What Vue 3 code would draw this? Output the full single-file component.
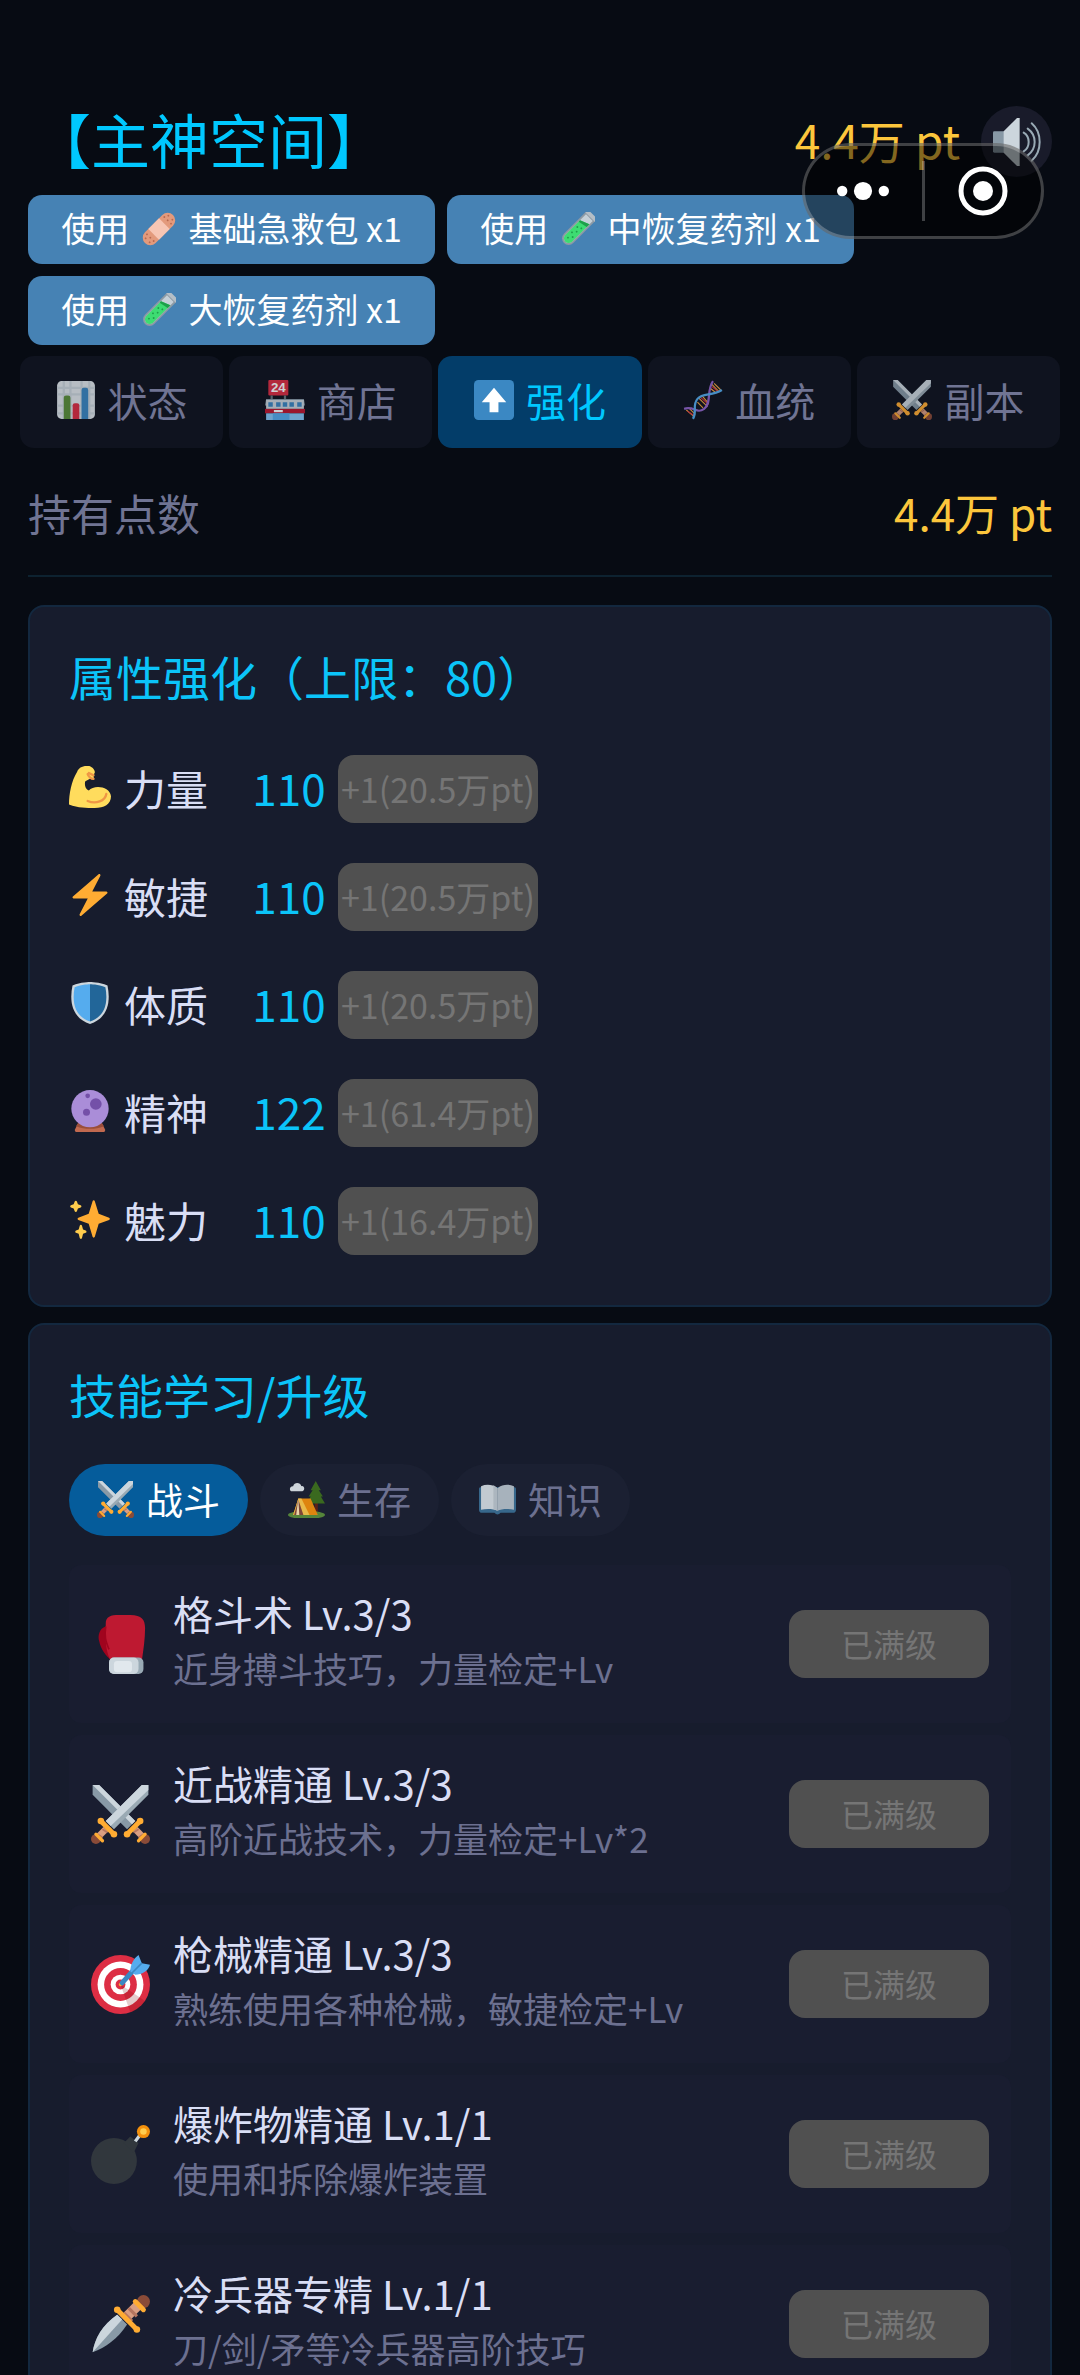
<template>
    <svg class="sprite" aria-hidden="true">
        <symbol id="bandage" viewBox="0 0 36 36">
            <g transform="rotate(-45 18 18)">
                <rect x="-3" y="10" width="42" height="16" rx="8" fill="#e39a7c"/>
                <rect x="10" y="10" width="16" height="16" fill="#f7c6b4"/>
                <g fill="#b96a50">
                    <circle cx="1" cy="15" r="1"/><circle cx="5" cy="13" r="1"/><circle cx="5" cy="18" r="1"/><circle cx="1" cy="21" r="1"/><circle cx="5" cy="23" r="1"/>
                    <circle cx="35" cy="15" r="1"/><circle cx="31" cy="13" r="1"/><circle cx="31" cy="18" r="1"/><circle cx="35" cy="21" r="1"/><circle cx="31" cy="23" r="1"/>
                </g>
            </g>
        </symbol>
        <symbol id="tube" viewBox="0 0 36 36">
            <g transform="rotate(45 18 18)">
                <path d="M11-2h14v34a7 7 0 0 1-14 0z" fill="#8d9aa5"/>
                <path d="M13 1h10v31a5 5 0 0 1-10 0z" fill="#c5d0d8"/>
                <path d="M13 10l10-4v26a5 5 0 0 1-10 0z" fill="#3ddc72"/>
                <path d="M13 10l10-4v4l-10 2z" fill="#1f9f4b"/>
                <rect x="10" y="-4" width="16" height="4" rx="2" fill="#b4bec6"/>
                <g fill="#1f9f4b">
                    <circle cx="16" cy="17" r="1"/><circle cx="20" cy="15" r="1"/><circle cx="19" cy="21" r="1"/><circle cx="16" cy="25" r="1"/><circle cx="20" cy="28" r="1"/><circle cx="17" cy="32" r="1"/>
                </g>
            </g>
        </symbol>
        <symbol id="chart" viewBox="0 0 36 36">
            <rect x="1" y="1" width="34" height="34" rx="4" fill="#e1e8ed"/>
            <path d="M7 1v34M13 1v34M23 1v34M30 1v34M1 7h34M1 13h34M1 23h34M1 30h34" stroke="#ccd6dd" stroke-width="2"/>
            <path d="M7 35V16a2 2 0 0 1 2-2h2a2 2 0 0 1 2 2v19z" fill="#5c913b"/>
            <path d="M15 35V23a2 2 0 0 1 2-2h2a2 2 0 0 1 2 2v12z" fill="#dd2e44"/>
            <path d="M23 35V9a2 2 0 0 1 2-2h2a2 2 0 0 1 2 2v26z" fill="#3b88c3"/>
        </symbol>
        <symbol id="store" viewBox="0 0 36 36">
            <rect x="3" y="0" width="18" height="14" rx="1" fill="#dd2e44"/>
            <path d="M6 14v3M18 14v3" stroke="#66757f" stroke-width="2"/>
            <path d="M1 17h34l1 6H0z" fill="#8899a6"/>
            <rect x="1" y="18" width="34" height="8" fill="#ccd6dd"/>
            <path d="M3 20h4v4H3zM10 20h4v4h-4zM16 20h4v4h-4zM22 20h4v4h-4zM29 20h4v4h-4z" fill="#3b88c3"/>
            <rect x="0" y="26" width="36" height="4" fill="#be1931"/>
            <rect x="1" y="30" width="34" height="6" fill="#88c9f9"/>
            <path d="M7 30h15v6H7z" fill="#55acee"/>
            <path d="M8 28h8" stroke="#fff" stroke-width="2"/>
        </symbol>
        <symbol id="up" viewBox="0 0 36 36">
            <rect width="36" height="36" rx="4" fill="#3b88c3"/>
            <path d="M18 7L7 20h7v9h8v-9h7z" fill="#fff"/>
        </symbol>
        <symbol id="dna" viewBox="0 0 36 36">
            <path d="M3 27l7 6M6 26l5 5M14 16l8 8M17 14l6 7M13 20l5 5M26 4l6 6M28 3l6 6M24 7l5 4" stroke="#f4a742" stroke-width="1"/>
            <path d="M4 28l6 4M15 15l8 7M26 6l5 4" stroke="#dd2e44" stroke-width="1"/>
            <path d="M1 26c9-3 11 5 18 0S21 9 27 1" fill="none" stroke="#9266cc" stroke-width="2"/>
            <path d="M9 35c4-7-1-12 4-18s13-2 22-8" fill="none" stroke="#55acee" stroke-width="2"/>
        </symbol>
        <symbol id="swords" viewBox="0 0 36 36">
            <path d="M1 0h4l22 22-5 5L1 6z" fill="#8899a6"/>
            <path d="M1 0h4l22 22-2 2z" fill="#ccd6dd"/>
            <path d="M27 27l5 5" stroke="#d99e82" stroke-width="4"/>
            <path d="M26 29l3-2M29 32l3-2" stroke="#b5755f" stroke-width="1"/>
            <circle cx="33" cy="33" r="3" fill="#8a4b38"/>
            <path d="M29 34l4-4" stroke="#ffac33" stroke-width="2" stroke-linecap="round"/>
            <path d="M22 30l8-8" stroke="#ffac33" stroke-width="3"/>
            <circle cx="30" cy="22" r="2" fill="#ffac33"/><circle cx="22" cy="30" r="2" fill="#ffac33"/>
            <path d="M35 0h-4L9 22l5 5L35 6z" fill="#9aaab4"/>
            <path d="M35 0h-4L9 22l3 3L35 3z" fill="#ccd6dd"/>
            <path d="M9 27l-5 5" stroke="#d99e82" stroke-width="4"/>
            <path d="M7 27l3 2M4 30l3 2" stroke="#b5755f" stroke-width="1"/>
            <circle cx="3" cy="33" r="3" fill="#8a4b38"/>
            <path d="M3 30l4 4" stroke="#ffac33" stroke-width="2" stroke-linecap="round"/>
            <path d="M6 22l8 8" stroke="#ffac33" stroke-width="3"/>
            <circle cx="6" cy="22" r="2" fill="#ffac33"/><circle cx="14" cy="30" r="2" fill="#ffac33"/>
        </symbol>
        <symbol id="muscle" viewBox="0 0 36 36">
            <path d="M15 0c3-1 8 3 7 6-1 1 0 2-1 3 1 2-1 3-3 2l-4 2c-1 3 0 7 3 8 4-5 18-4 19 5 0 7-6 10-14 10-7 0-14 0-22-3C0 24 2 13 7 5c1-3 4-5 8-5z" fill="#ffdc5d"/>
            <path d="M16 30c7 3 15 0 16-6M16 7c1 2 3 4 5 4M17 6l4 2" fill="none" stroke="#ef9645" stroke-width="2" stroke-linecap="round"/>
        </symbol>
        <symbol id="bolt" viewBox="0 0 36 36">
            <path d="M32.938 15.651C32.792 15.26 32.418 15 32 15H19.925L26.89 1.458c.219-.426.106-.947-.271-1.243C26.437.071 26.218 0 26 0c-.233 0-.466.082-.653.243L18 6.588 3.347 19.243c-.316.273-.43.714-.284 1.105S3.582 21 4 21h12.075L9.11 34.542c-.219.426-.106.947.271 1.243.182.144.401.215.619.215.233 0 .466-.082.653-.243L18 29.412l14.653-12.655c.317-.273.43-.714.285-1.106z" fill="#ffac33"/>
        </symbol>
        <symbol id="shield" viewBox="0 0 36 36">
            <path d="M33 3c-7-3-15-3-15-3S10 0 3 3C0 18 3 31 18 36c15-5 18-18 15-33z" fill="#ccd6dd"/>
            <path d="M18 33.9C6.4 29.7 2 19.8 4.8 4.4 11 2 18 2 18 2z" fill="#55acee"/>
            <path d="M18 33.9c11.6-4.2 16-14.1 13.2-29.5C25 2 18 2 18 2z" fill="#226699"/>
        </symbol>
        <symbol id="orb" viewBox="0 0 36 36">
            <path d="M8 28h20l3 6c0 1 0 2-2 2H7c-2 0-2-1-2-2z" fill="#c1694f"/>
            <path d="M8 28h20l2 3c-8 3-16 3-24 0z" fill="#9a4e3a"/>
            <circle cx="18" cy="16" r="16" fill="#aa8dd8"/>
            <circle cx="23" cy="12" r="5" fill="#7450a8"/>
            <circle cx="15" cy="19" r="3" fill="#7450a8"/>
            <circle cx="16" cy="5" r="2" fill="#7450a8"/>
        </symbol>
        <symbol id="sparkles" viewBox="0 0 36 36">
            <path d="M34.347 16.893l-8.899-3.294-3.323-10.891c-.128-.42-.517-.708-.956-.708-.439 0-.828.288-.956.708l-3.322 10.891-8.9 3.294c-.393.146-.653.519-.653.938 0 .418.26.793.653.938l8.895 3.293 3.324 11.223c.126.424.516.715.959.715.442 0 .833-.291.959-.716l3.324-11.223 8.896-3.293c.391-.144.652-.518.652-.937 0-.418-.261-.792-.653-.938z" fill="#ffac33"/>
            <path d="M14.347 27.894l-2.314-.856-.9-3.3c-.118-.436-.513-.738-.964-.738-.451 0-.846.302-.965.737l-.9 3.3-2.313.856c-.393.146-.653.52-.653.938 0 .418.26.793.653.938l2.301.853.907 3.622c.112.444.511.756.97.756.459 0 .858-.312.97-.757l.907-3.622 2.301-.853c.393-.144.653-.519.653-.937 0-.418-.26-.793-.653-.937zM10.009 6.231l-2.364-.875-.876-2.365c-.145-.393-.519-.653-.938-.653-.418 0-.792.26-.938.653l-.875 2.365-2.365.875c-.393.146-.653.52-.653.938 0 .418.26.793.653.938l2.365.875.875 2.365c.146.393.52.653.938.653.418 0 .792-.26.938-.653l.875-2.365 2.365-.875c.393-.146.653-.52.653-.938 0-.418-.26-.792-.653-.938z" fill="#ffcc4d"/>
        </symbol>
        <symbol id="camp" viewBox="0 0 36 36">
            <path d="M2 9a3 3 0 0 1 3-4c1-4 7-4 8 0 3-1 4 4 1 5H3z" fill="#e1e8ed"/>
            <path d="M26 20h3v12h-3z" fill="#662113"/>
            <path d="M27 0l-5 9h2l-4 6h2l-3 7h17l-4-7h2l-4-6h2z" fill="#3e721d"/>
            <ellipse cx="18" cy="33" rx="18" ry="4" fill="#5c913b"/>
            <path d="M10 17h12l7 16H5z" fill="#f4900c"/>
            <path d="M10 17h3l8 16H5z" fill="#ffcc4d"/>
            <path d="M10 18l5 15H6z" fill="#8a4b38"/>
            <path d="M10 17l1 16H8z" fill="#ffe8b6"/>
        </symbol>
        <symbol id="book" viewBox="0 0 36 36">
            <path d="M0 8c0-2 1-2 2-2h32c1 0 2 0 2 2v20c0 2-1 3-3 3H21c-2 2-4 2-6 0H3c-2 0-3-1-3-3z" fill="#3b6f95"/>
            <path d="M2 5c5-2 11-2 16 2v22c-4-2-11-2-16-1z" fill="#d5dde3"/>
            <path d="M34 5c-5-2-11-2-16 2v22c4-2 11-2 16-1z" fill="#b7c2cb"/>
            <path d="M18 7v22" stroke="#8899a6" stroke-width="1"/>
            <path d="M14 4l4 3v22l-4-2z" fill="#bcc7cf"/>
        </symbol>
        <symbol id="glove" viewBox="0 0 36 36">
            <path d="M9 7c-4 1-5 6-4 9 1 5 4 9 8 12z" fill="#a0041e"/>
            <path d="M9 5c0-4 3-5 8-5h7c7 0 9 3 9 8 0 7-1 13-2 20H12C8 20 9 11 9 5z" fill="#be1931"/>
            <path d="M9 7c-1 6 0 9 2 14" fill="none" stroke="#a0041e" stroke-width="1"/>
            <rect x="11" y="26" width="21" height="10" rx="3" fill="#99aab5"/>
            <rect x="11" y="26" width="18" height="10" rx="3" fill="#ccd6dd"/>
            <rect x="14" y="28" width="11" height="7" rx="2" fill="#e1e8ed"/>
        </symbol>
        <symbol id="target" viewBox="0 0 36 36">
            <circle cx="18" cy="18" r="18" fill="#dd2e44"/>
            <circle cx="18" cy="18" r="14" fill="#fff"/>
            <circle cx="18" cy="18" r="10" fill="#dd2e44"/>
            <circle cx="18" cy="18" r="6" fill="#fff"/>
            <circle cx="18" cy="18" r="3" fill="#dd2e44"/>
            <path d="M18 18l15 10a18 18 0 0 1-9 7z" fill="#700" opacity=".2"/>
            <circle cx="18" cy="18" r="1" fill="#ffac33"/>
            <path d="M19 17l8-9" stroke="#3b88c3" stroke-width="3" stroke-linecap="round"/>
            <path d="M24 10c0-4 2-8 5-10l2 5 5 1c-1 4-5 6-9 6z" fill="#55acee"/>
            <path d="M25 11l6-6" stroke="#3b88c3" stroke-width="1"/>
        </symbol>
        <symbol id="bomb" viewBox="0 0 36 36">
            <circle cx="14" cy="22" r="14" fill="#31373d"/>
            <path d="M20 11l4-4 5 4-3 6z" fill="#31373d"/>
            <path d="M27 10l3-4" stroke="#ccd6dd" stroke-width="2"/>
            <circle cx="32" cy="4" r="4" fill="#f4900c"/>
            <circle cx="32" cy="4" r="2" fill="#ffcc4d"/>
        </symbol>
        <symbol id="dagger" viewBox="0 0 36 36">
            <path d="M1 35c1-8 6-17 15-23l6 6C16 27 9 32 1 35z" fill="#8899a6"/>
            <path d="M1 35c1-8 6-17 15-23l3 3z" fill="#ccd6dd"/>
            <path d="M20 15l10-10" stroke="#d99e82" stroke-width="6"/>
            <path d="M20 11l5 5M23 8l5 5" stroke="#b5755f" stroke-width="2"/>
            <circle cx="32" cy="4" r="4" fill="#8a4b38"/>
            <path d="M27 4l5 5M16 9l12 12" stroke="#ffac33" stroke-width="3" stroke-linecap="round"/>
            <circle cx="16" cy="9" r="2" fill="#ffac33"/><circle cx="28" cy="21" r="2" fill="#ffac33"/>
        </symbol>
        <symbol id="speaker" viewBox="0 0 36 36">
            <path d="M0 11q0-1 1-1h8v16H1q-1 0-1-1z" fill="#8899a6"/>
            <path d="M8 10L18 0h2v36h-2L8 26z" fill="#ccd6dd"/>
            <path d="M23 11c5 3 5 11 0 14M26 8c7 5 7 15 0 20M29 4c8 7 8 21 0 28" fill="none" stroke="#99aab5" stroke-width="1.5" stroke-linecap="round"/>
        </symbol>
    </svg>

    <div class="page">
        <header class="header">
            <h1>【主神空间】</h1>
            <span class="points">{{ points }}</span>
            <button class="sound" aria-label="声音">
                <svg class="icon"><use href="#speaker"/></svg>
            </button>
        </header>

        <div class="items">
            <button v-for="item in items" :key="item.name" class="use">
                使用 <svg class="icon"><use :href="item.icon"/></svg> {{ item.name }} x{{ item.count }}
            </button>
        </div>

        <nav class="tabs">
            <button v-for="tab in tabs" :key="tab.name" :class="{ active: tab.name == currentTab }" @click="currentTab = tab.name">
                <svg class="icon" viewBox="0 0 36 36">
                    <use :href="tab.icon"/>
                    <text v-if="tab.sign" x="12" y="11" text-anchor="middle" class="sign">{{ tab.sign }}</text>
                </svg>
                <span>{{ tab.name }}</span>
            </button>
        </nav>

        <div class="owned">
            <span>持有点数</span>
            <span class="points">{{ points }}</span>
        </div>

        <section class="card">
            <h2>属性强化（上限：80）</h2>
            <div v-for="attr in attrs" :key="attr.name" class="attr">
                <div class="attr-name">
                    <svg class="icon"><use :href="attr.icon"/></svg>
                    <span>{{ attr.name }}</span>
                </div>
                <span class="attr-value">{{ attr.value }}</span>
                <button class="upgrade" disabled>+1({{ attr.cost }}pt)</button>
            </div>
        </section>

        <section class="card">
            <h2>技能学习/升级</h2>
            <div class="pills">
                <button v-for="group in groups" :key="group.name" :class="{ active: group.name == currentGroup }" @click="currentGroup = group.name">
                    <svg class="icon"><use :href="group.icon"/></svg>
                    <span>{{ group.name }}</span>
                </button>
            </div>
            <div class="skills">
                <div v-for="skill in skills" :key="skill.name" class="skill">
                    <svg class="icon"><use :href="skill.icon"/></svg>
                    <div class="skill-text">
                        <h3>{{ skill.name }} Lv.{{ skill.level }}/{{ skill.level }}</h3>
                        <p>{{ skill.desc }}</p>
                    </div>
                    <button class="upgrade" disabled>已满级</button>
                </div>
            </div>
        </section>
    </div>

    <!-- mini program menu, floats over the page -->
    <div class="capsule">
        <button aria-label="更多">
            <svg viewBox="0 0 40 20" width="52" height="26">
                <circle cx="4" cy="10" r="4"/><circle cx="20" cy="10" r="7"/><circle cx="36" cy="10" r="4"/>
            </svg>
        </button>
        <button aria-label="关闭">
            <svg viewBox="0 0 50 50" width="50" height="50">
                <circle class="ring" cx="25" cy="25" r="22"/><circle cx="25" cy="25" r="10"/>
            </svg>
        </button>
    </div>
</template>

<script setup>
import { ref } from "vue"

const points = "4.4万 pt"
const currentTab = ref("强化")
const currentGroup = ref("战斗")

const items = [
    { icon: "#bandage", name: "基础急救包", count: 1 },
    { icon: "#tube", name: "中恢复药剂", count: 1 },
    { icon: "#tube", name: "大恢复药剂", count: 1 }
]

const tabs = [
    { icon: "#chart", name: "状态" },
    { icon: "#store", name: "商店", sign: "24" },
    { icon: "#up", name: "强化" },
    { icon: "#dna", name: "血统" },
    { icon: "#swords", name: "副本" }
]

const attrs = [
    { icon: "#muscle", name: "力量", value: 110, cost: "20.5万" },
    { icon: "#bolt", name: "敏捷", value: 110, cost: "20.5万" },
    { icon: "#shield", name: "体质", value: 110, cost: "20.5万" },
    { icon: "#orb", name: "精神", value: 122, cost: "61.4万" },
    { icon: "#sparkles", name: "魅力", value: 110, cost: "16.4万" }
]

const groups = [
    { icon: "#swords", name: "战斗" },
    { icon: "#camp", name: "生存" },
    { icon: "#book", name: "知识" }
]

const skills = [
    { icon: "#glove", name: "格斗术", level: 3, desc: "近身搏斗技巧，力量检定+Lv" },
    { icon: "#swords", name: "近战精通", level: 3, desc: "高阶近战技术，力量检定+Lv*2" },
    { icon: "#target", name: "枪械精通", level: 3, desc: "熟练使用各种枪械，敏捷检定+Lv" },
    { icon: "#bomb", name: "爆炸物精通", level: 1, desc: "使用和拆除爆炸装置" },
    { icon: "#dagger", name: "冷兵器专精", level: 1, desc: "刀/剑/矛等冷兵器高阶技巧" }
]
</script>

<style>
html, body {
    margin: 0;
    background-color: #070b13;
}
</style>
<style scoped>
.sprite {
    position: absolute;
    width: 0;
    height: 0;
}
.page {
    box-sizing: border-box;
    height: 100vh;
    overflow-y: auto;
    scrollbar-width: none;
    padding: 106px 28px 28px;
    background-color: #070b13;
    color: #d9def5;
}
.page, button {
    font-family: "Noto Sans CJK SC", sans-serif;
}
h1, h2, h3, p {
    margin: 0;
    font-weight: 400;
}
button {
    border: none;
    padding: 0;
    cursor: pointer;
}
.icon {
    flex: none;
    width: 1em;
    height: 1em;
}
.header {
    display: flex;
    align-items: center;
    height: 71px;
    margin-bottom: 18px;
    padding-left: 4px;
}
h1 {
    flex: 1;
    padding-bottom: 6px;
    font-size: 59px;
    line-height: 65px;
    color: #00c8ff;
}
.points {
    font-size: 44px;
    color: #fcc63c;
}
.header .points {
    padding-bottom: 6px;
    font-size: 46px;
}
.sound {
    display: flex;
    align-items: center;
    justify-content: center;
    width: 71px;
    height: 71px;
    margin-left: 21px;
    border-radius: 50%;
    background-color: #191b2a;
    font-size: 48px;
}
.items {
    display: flex;
    flex-wrap: wrap;
    gap: 12px;
    margin-bottom: 11px;
}
.use {
    width: 407px;
    height: 69px;
    padding-bottom: 4px;
    border-radius: 14px;
    background-color: #4682b4;
    color: #fff;
    font-size: 34px;
    white-space: nowrap;
}
.use .icon {
    margin: 0 5px;
    vertical-align: -4px;
}
.tabs {
    display: flex;
    gap: 6px;
    margin: 0 -8px;
}
.tabs button {
    flex: 1;
    display: flex;
    align-items: center;
    justify-content: center;
    gap: 12px;
    height: 92px;
    padding-bottom: 4px;
    border-radius: 14px;
    background-color: #0f131f;
    color: #707493;
    font-size: 40px;
}
.tabs .icon {
    opacity: .8;
}
.sign {
    font: bold 12px "Liberation Sans", sans-serif;
    fill: #fff;
}
.tabs .active {
    background-color: #033d69;
    color: #00c8ff;
}
.tabs .active .icon {
    opacity: 1;
}
.owned {
    display: flex;
    align-items: center;
    justify-content: space-between;
    height: 127px;
    margin-bottom: 28px;
    border-bottom: 2px solid #0d2230;
    color: #707493;
    font-size: 43px;
}
.card {
    margin-bottom: 16px;
    padding: 34px 39px 50px;
    border: 2px solid #13283f;
    border-radius: 16px;
    background-color: #171c2d;
}
h2 {
    padding-bottom: 4px;
    font-size: 47px;
    line-height: 70px;
    color: #0bc4f9;
}
.attr {
    display: flex;
    align-items: center;
    height: 68px;
    margin-top: 40px;
}
.attr-name {
    display: flex;
    align-items: center;
    gap: 13px;
    width: 180px;
    padding-bottom: 4px;
    font-size: 42px;
}
.attr-value {
    width: 80px;
    margin-right: 9px;
    padding-bottom: 4px;
    text-align: center;
    font-size: 44px;
    color: #0bc4f9;
}
.upgrade {
    flex: none;
    width: 200px;
    height: 68px;
    padding-bottom: 2px;
    border-radius: 16px;
    background-color: #505050;
    color: #757575;
    font-size: 34px;
    white-space: nowrap;
    cursor: default;
}
.pills {
    display: flex;
    gap: 12px;
    margin: 31px 0 29px;
}
.pills button {
    display: flex;
    align-items: center;
    gap: 12px;
    height: 72px;
    padding: 0 28px 2px;
    border-radius: 36px;
    background-color: #1b2032;
    color: #6c7090;
    font-size: 37px;
}
.pills .icon {
    opacity: .9;
}
.pills .active {
    background-color: #055c9b;
    color: #fff;
}
.pills .active .icon {
    opacity: 1;
}
.skills {
    display: flex;
    flex-direction: column;
    gap: 12px;
}
.skill {
    display: flex;
    align-items: center;
    height: 158px;
    padding: 0 22px;
    border-radius: 12px;
    background-color: #191d30;
}
.skill .icon {
    font-size: 59px;
}
.skill .upgrade {
    font-size: 32px;
}
.skill-text {
    flex: 1;
    margin-left: 23px;
    padding-bottom: 8px;
}
h3 {
    font-size: 40px;
    line-height: 56px;
}
.skill-text p {
    font-size: 35px;
    line-height: 54px;
    color: #6c7090;
}
.capsule {
    position: absolute;
    top: 143px;
    right: 36px;
    box-sizing: border-box;
    display: flex;
    align-items: center;
    width: 242px;
    height: 96px;
    border: 3px solid rgba(255, 255, 255, .24);
    border-radius: 48px;
    background-color: rgba(0, 0, 0, .48);
}
.capsule button {
    flex: 1;
    display: flex;
    align-items: center;
    justify-content: center;
    height: 60px;
    background: none;
}
.capsule button + button {
    border-left: 3px solid rgba(255, 255, 255, .24);
}
.capsule svg {
    fill: #fff;
}
.capsule .ring {
    fill: none;
    stroke: #fff;
    stroke-width: 5px;
}
</style>
